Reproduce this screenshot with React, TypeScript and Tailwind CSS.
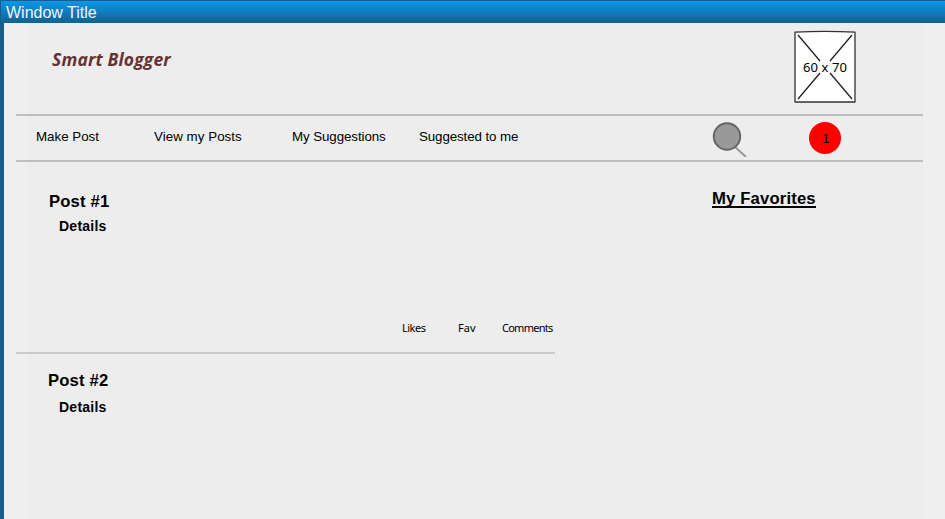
const sans = "font-['Liberation_Sans',Arial,sans-serif] whitespace-nowrap";
const ui = "font-['Noto_Sans',sans-serif] whitespace-nowrap";

function Post({ title, className, detailsClass }: { title: string; className: string; detailsClass: string }) {
  return (
    <article className={`${sans} ${className}`}>
      <h2 className="text-[16.67px] leading-5 font-bold tracking-[0.15px]">{title}</h2>
      <p className={`text-[14px] leading-4 font-bold tracking-[0.25px] ${detailsClass}`}>Details</p>
    </article>
  );
}

function ImagePlaceholder() {
  return (
    <svg className="mt-[7px] mr-[66px] ml-auto h-[74px] w-[63px]" viewBox="0 0 63 74">
      <path d="M1 2.2 Q31 0.4 61 2.2 L61 72 L1 72 Z" fill="#fff" stroke="#333" strokeWidth="1.3" strokeLinejoin="round" />
      <path d="M4 5 L26 31 M58 5 L36 31 M26 43 L4 69 M36 43 L58 69" stroke="#222" strokeWidth="1.3" fill="none" />
      <text x="9" y="42" textLength="44" fontSize="13" fontFamily="Noto Sans, sans-serif">60 x 70</text>
    </svg>
  );
}

export default function App() {
  return (
    <div className="flex h-[519px] w-[945px] flex-col overflow-hidden bg-[#efefef] text-black">
      <header className={`${sans} h-[23px] shrink-0 border-t border-l border-[#155f8a] bg-linear-to-b from-[#0598ea] to-[#12618f] pt-[2px] pl-[5px] text-base leading-5 text-[#f0f5f8]`}>
        Window Title
      </header>
      <div className="flex min-h-0 flex-1 border-l-4 border-[#155f8a] pr-[22px] pl-6">
        <main className="flex w-[895px] flex-col bg-[#ededed]">
          <div className="flex h-[91px]">
            <h1 className="mt-[24px] ml-[24px] font-['Open_Sans',sans-serif] text-[17.5px] leading-6 font-bold tracking-[0.15px] whitespace-nowrap text-[#663333] italic">
              Smart Blogger
            </h1>
            <ImagePlaceholder />
          </div>
          <nav className={`${sans} -ml-3 flex h-12 border-y-2 border-[#bfbfbf] pl-5 text-[13.33px] leading-5`}>
            <span className="mt-[11px] w-[118px]">Make Post</span>
            <span className="mt-[11px] w-[138px] tracking-[0.05px]">View my Posts</span>
            <span className="mt-[11px] w-[127px] tracking-[-0.08px]">My Suggestions</span>
            <span className="mt-[11px] w-[293px] tracking-[-0.1px]">Suggested to me</span>
            <svg className="mt-[5px] h-9 w-9" viewBox="0 0 36 36">
              <path d="M22 25 L34 36" stroke="#999" strokeWidth="2" />
              <circle cx="15" cy="15.5" r="13.2" fill="#999" stroke="#666" strokeWidth="2" />
            </svg>
            <span className="mt-[6px] ml-[61px] flex size-8 items-center justify-center rounded-full bg-[#ff0000] pt-px pl-[2px]">1</span>
          </nav>
          <div className="flex min-h-0 flex-1">
            <section className="-ml-3 flex w-[539px] flex-col">
              <div className="flex h-[192px] flex-col border-b-2 border-[#cbcbcb]">
                <Post title="Post #1" className="mt-[30px] ml-[33px]" detailsClass="mt-[6px] ml-[10px]" />
                <div className={`${ui} mt-auto mb-[16px] flex pl-[386px] text-[11px] leading-4`}>
                  <span className="w-14 tracking-[-0.5px]">Likes</span>
                  <span className="w-11">Fav</span>
                  <span className="tracking-[-0.75px]">Comments</span>
                </div>
              </div>
              <Post title="Post #2" className="mt-[17px] ml-[32px]" detailsClass="mt-[8px] ml-[11px]" />
            </section>
            <aside className={`${sans} mt-[27px] ml-[157px]`}>
              <h2 className="h-[19px] border-b-2 border-black text-[16.67px] leading-5 font-bold tracking-[0.16px]">My Favorites</h2>
            </aside>
          </div>
        </main>
      </div>
    </div>
  );
}
